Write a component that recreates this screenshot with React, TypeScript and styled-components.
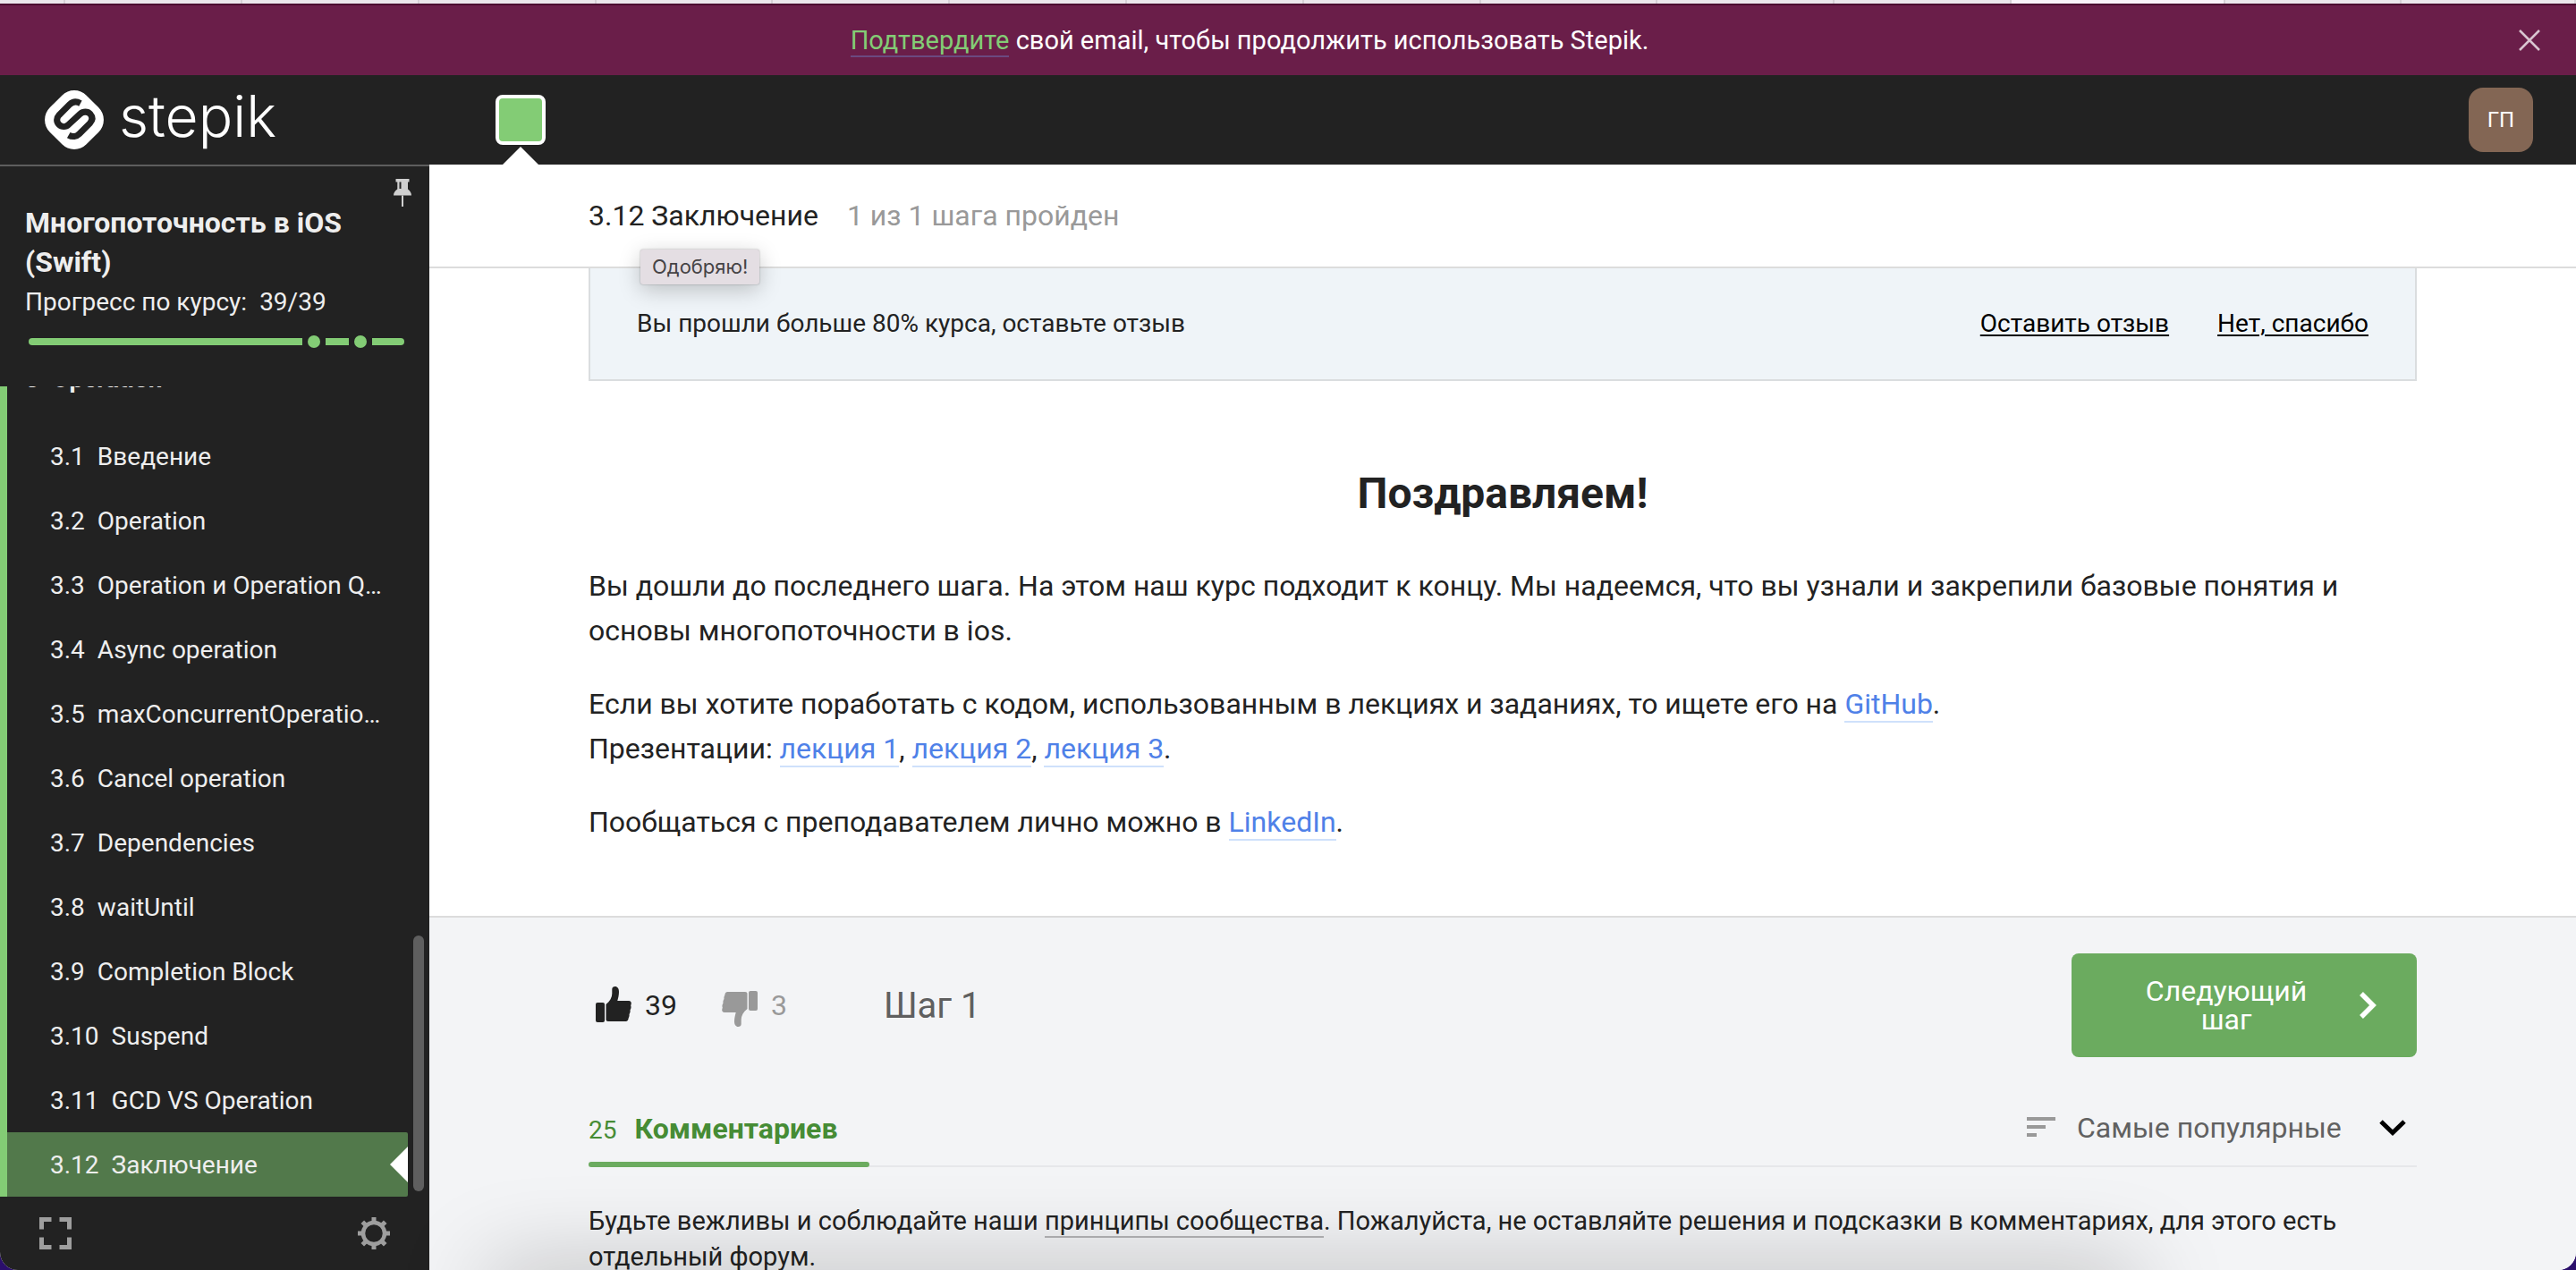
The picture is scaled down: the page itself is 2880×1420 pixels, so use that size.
import React from "react";
import styled, { createGlobalStyle, css } from "styled-components";

const GlobalStyle = createGlobalStyle`
  *, *::before, *::after { box-sizing: border-box; }
  html, body { margin: 0; padding: 0; background: #2b0f6b; }
  body { font-family: Roboto, "Noto Sans", sans-serif; color: #222; font-size: 28px; }
  h1, h2, p, ul { margin: 0; padding: 0; }
  button, select { font: inherit; color: inherit; background: none; border: 0; margin: 0; padding: 0; cursor: pointer; }
  a { color: inherit; text-decoration: none; }
  svg { display: block; flex: none; }
`;

const Page = styled.div`
  position: relative;
  display: flex;
  flex-direction: column;
  height: 100vh;
  overflow: hidden;
  background: #fff;
  border-radius: 0 0 20px 20px;
`;

const TabStrip = styled.div`
  display: flex;
  flex: none;
  height: 4px;
  background: #ebe6eb;
`;

const BrowserTab = styled.div<{ $basis: number; $active?: boolean }>`
  flex: ${(p) => p.$basis} 1 0;
  border-right: 2px solid #d6d1d6;
  background: ${(p) => (p.$active ? "#f9f2f9" : "transparent")};
`;

const EmailBar = styled.div`
  display: flex;
  align-items: center;
  flex: none;
  height: 80px;
  padding: 0 40px 0 0;
  background: #6a1e49;
  border-top: 2px solid #4b0a30;
  color: #fff;
`;

const EmailText = styled.p`
  flex: 1;
  text-align: center;
  font-size: 29px;
  line-height: 32px;
`;

const ConfirmLink = styled.a`
  color: #83cc75;
  border-bottom: 2px solid #6b4980;
`;

const CloseButton = styled.button`
  padding: 0 0 0 22px;
`;

const TopBar = styled.header`
  display: flex;
  flex: none;
  height: 100px;
  padding-right: 48px;
  background: #222;
`;

const Logo = styled.a`
  display: flex;
  align-items: center;
  gap: 17px;
  width: 480px;
  padding-left: 50px;
  color: #fff;
`;

const LogoWord = styled.span`
  font-family: Inter, "Noto Sans", sans-serif;
  font-weight: 300;
  font-size: 64px;
  line-height: 64px;
  padding-bottom: 8px;
`;

const StepPins = styled.nav`
  display: flex;
  flex: 1;
  align-items: flex-end;
  padding-left: 74px;
`;

const StepPin = styled.a`
  display: flex;
  flex-direction: column;
  align-items: center;
  gap: 2px;
`;

const StepSquare = styled.span`
  width: 56px;
  height: 56px;
  border: 4px solid #fff;
  border-radius: 8px;
  background: #83cc75;
`;

const Pointer = styled.span<{ $side: "up" | "left" }>`
  width: 0;
  height: 0;
  border: 20px solid transparent;
  ${(p) =>
    p.$side === "up"
      ? css`
          border-top: 0;
          border-bottom-color: #fff;
        `
      : css`
          border-left: 0;
          border-right-color: #fff;
        `}
`;

const Avatar = styled.button`
  align-self: center;
  width: 72px;
  height: 72px;
  border-radius: 16px;
  background: #836654;
  color: #fff;
  font-size: 24px;
`;

const Body = styled.div`
  display: flex;
  flex: 1;
  min-height: 0;
`;

const Sidebar = styled.aside`
  display: flex;
  flex-direction: column;
  flex: none;
  width: 480px;
  background: #222;
  border-top: 2px solid #5e5e5e;
  color: #eee;
`;

const CourseHead = styled.div`
  flex: none;
  padding: 14px 20px 43px 28px;
`;

const CourseTitleRow = styled.div`
  display: flex;
  align-items: flex-start;
  justify-content: space-between;
`;

const CourseTitle = styled.h2`
  flex: 1;
  margin-top: 27px;
  font-size: 32px;
  font-weight: 700;
  line-height: 44px;
`;

const CourseProgress = styled.p`
  display: flex;
  gap: 14px;
  line-height: 46px;
`;

const Track = styled.div`
  display: flex;
  align-items: center;
  gap: 6px;
  height: 14px;
  margin: 14px 8px 0 4px;
`;

const TrackBar = styled.span<{ $grow: number; $edge?: "start" | "end" }>`
  flex: ${(p) => p.$grow} 1 0;
  height: 8px;
  background: #83cc75;
  border-radius: ${(p) =>
    p.$edge === "start" ? "4px 0 0 4px" : p.$edge === "end" ? "0 4px 4px 0" : "0"};
`;

const TrackDot = styled.span`
  width: 14px;
  height: 14px;
  border-radius: 50%;
  background: #83cc75;
`;

const LessonArea = styled.nav`
  display: flex;
  flex: 1;
  min-height: 0;
  overflow: hidden;
`;

const LessonColumn = styled.div`
  display: flex;
  flex: 1;
  min-width: 0;
  flex-direction: column;
  justify-content: flex-end;
  border-left: 8px solid #83cc75;
`;

const ModuleTitle = styled.div`
  display: flex;
  flex: none;
  gap: 14px;
  padding-left: 20px;
  margin-bottom: 14px;
  line-height: 72px;
  font-weight: 700;
`;

const LessonList = styled.ul`
  flex: none;
  list-style: none;
`;

const Lesson = styled.a<{ $active?: boolean }>`
  display: flex;
  align-items: center;
  gap: 14px;
  height: 72px;
  padding-left: 48px;
  border-radius: 0 2px 2px 0;
  background: ${(p) => (p.$active ? "#52794b" : "transparent")};
`;

const LessonName = styled.span`
  flex: 1;
  min-width: 0;
  padding-right: 26px;
  overflow: hidden;
  text-overflow: ellipsis;
  white-space: nowrap;
`;

const ScrollRail = styled.div`
  display: flex;
  flex: none;
  flex-direction: column;
  justify-content: flex-end;
  width: 24px;
  padding: 6px;
`;

const ScrollThumb = styled.div`
  height: 32%;
  border-radius: 6px;
  background: #5f5f5f;
`;

const SidebarFoot = styled.div`
  display: flex;
  flex: none;
  justify-content: space-between;
  height: 82px;
  padding: 23px 44px;
  color: #9e9e9e;
`;

const Main = styled.main`
  flex: 1;
  min-width: 0;
  overflow: hidden;
`;

const LessonHead = styled.div`
  position: relative;
  display: flex;
  align-items: center;
  gap: 32px;
  height: 116px;
  padding: 0 178px;
  border-bottom: 2px solid #dcdcdc;
  font-size: 32px;
`;

const Passed = styled.span`
  color: #999;
`;

const Tooltip = styled.div`
  position: absolute;
  left: 236px;
  top: 95px;
  padding: 0 13px;
  border-radius: 3px;
  background: #e4dee3;
  box-shadow: 0 6px 24px rgba(0, 0, 0, 0.22), 0 0 2px rgba(0, 0, 0, 0.35);
  color: #454345;
  font-family: Inter, "Noto Sans", sans-serif;
  font-size: 22px;
  line-height: 39px;
`;

const Content = styled.div`
  padding: 0 178px;
`;

const ReviewBox = styled.div`
  display: flex;
  gap: 54px;
  padding: 40px 52px;
  border: 2px solid #dadddf;
  border-top: 0;
  background: #eff4f8;
  line-height: 44px;
`;

const ReviewText = styled.p`
  flex: 1;
`;

const ReviewAction = styled.button`
  color: #000;
  text-decoration: underline;
  text-decoration-thickness: 2px;
  text-underline-offset: 3px;
`;

const Article = styled.article`
  display: flex;
  flex-direction: column;
  gap: 32px;
  padding: 96px 0 80px;
  font-size: 32px;
  line-height: 50px;
`;

const Heading = styled.h1`
  margin-bottom: 16px;
  text-align: center;
  font-size: 48px;
  line-height: 60px;
`;

const TextLink = styled.a`
  color: #4f81e8;
  border-bottom: 2px solid #cfe1fb;
`;

const Discussion = styled.section`
  min-height: 100%;
  padding: 40px 178px 0;
  border-top: 2px solid #dcdcdc;
  background: #f3f4f6;
`;

const StepRow = styled.div`
  display: flex;
  align-items: center;
  padding-left: 8px;
`;

const Vote = styled.button<{ $muted?: boolean }>`
  display: flex;
  align-items: center;
  gap: 15px;
  margin-right: 50px;
  font-size: 32px;
  color: ${(p) => (p.$muted ? "#999" : "#222")};
`;

const StepLabel = styled.span`
  flex: 1;
  padding-left: 58px;
  font-size: 40px;
  color: #5f5f5f;
`;

const NextButton = styled.button`
  display: flex;
  align-items: center;
  gap: 16px;
  width: 386px;
  height: 116px;
  padding: 0 44px 0 40px;
  border-radius: 8px;
  background: #6bab5f;
  color: #fff;
  font-size: 32px;
  line-height: 32px;
`;

const NextText = styled.span`
  flex: 1;
  padding: 0 36px;
  text-align: center;
`;

const CommentsHead = styled.div`
  display: flex;
  align-items: stretch;
  justify-content: space-between;
  height: 87px;
  margin-top: 36px;
  border-bottom: 2px solid #e6e7ea;
`;

const CommentsTab = styled.button`
  position: relative;
  display: flex;
  align-items: baseline;
  gap: 20px;
  padding: 22px 36px 0 0;
  color: #468c35;
  line-height: 44px;

  &::after {
    content: "";
    position: absolute;
    left: 0;
    right: 0;
    bottom: -2px;
    height: 6px;
    border-radius: 3px;
    background: #6bab5f;
  }
`;

const CommentsWord = styled.span`
  font-size: 32px;
  font-weight: 700;
`;

const Sort = styled.label`
  position: relative;
  display: flex;
  align-items: center;
  gap: 24px;
  padding-right: 12px;
  color: #616161;
`;

const SortSelect = styled.select`
  appearance: none;
  padding-right: 72px;
  font-size: 32px;
`;

const SortChevron = styled.svg`
  position: absolute;
  right: 12px;
  pointer-events: none;
`;

const Rules = styled.p`
  margin-top: 40px;
  font-size: 29px;
  line-height: 40px;
`;

const RulesLink = styled.a`
  border-bottom: 2px solid #b4b4b6;
`;

const DockShadow = styled.div`
  position: absolute;
  left: 19%;
  right: 17%;
  top: 100%;
  height: 60px;
  pointer-events: none;
  box-shadow: 0 0 100px rgba(0, 0, 0, 0.27);
`;

const lessons: [string, string][] = [
  ["3.1", "Введение"],
  ["3.2", "Operation"],
  ["3.3", "Operation и Operation Queue"],
  ["3.4", "Async operation"],
  ["3.5", "maxConcurrentOperationCount"],
  ["3.6", "Cancel operation"],
  ["3.7", "Dependencies"],
  ["3.8", "waitUntil"],
  ["3.9", "Completion Block"],
  ["3.10", "Suspend"],
  ["3.11", "GCD VS Operation"],
  ["3.12", "Заключение"],
];

const tabs = [72, 198, 198, 198, 198, 198, 198, 198, 198, 198, 198, 198, 240, 197, 195];

const LogoMark = () => (
  <svg width="66" height="66" viewBox="0 0 195 195" aria-hidden="true">
    <rect x="12" y="12" width="171" height="171" rx="57" fill="#fff" transform="rotate(45 97.5 97.5)" />
    <path
      d="M118 43C105 36 92 38 83 46L48 81C38 92 38 104 47 113C56 122 70 122 79 113L117 78C127 69 142 69 150 78C159 88 158 99 149 109L114 144C105 153 91 155 79 148"
      fill="none"
      stroke="#222"
      strokeWidth="21"
    />
  </svg>
);

const PinIcon = () => (
  <svg width="20" height="31" viewBox="0 0 20 31" fill="#d0d0d0">
    <path fillRule="evenodd" d="M2.5 0H17.5V3.5H16V11.5C18.5 13.5 20 15.5 20 18.500H0C0 15.500 1.500 13.500 4.300 11.500V3.500H2.500ZM6.500 3.500V11H8.500V3.500Z" />
    <path d="M9 18.500H11V31H9Z" />
  </svg>
);

const ExpandIcon = () => (
  <svg width="36" height="36" viewBox="0 0 36 36" fill="none" stroke="currentColor" strokeWidth="5">
    <path d="M2.500 13.500V2.500H13.500M22.500 2.500H33.500V13.500M33.500 22.500V33.500H22.500M13.500 33.500H2.500V22.500" />
  </svg>
);

const GearIcon = () => (
  <svg width="36" height="36" viewBox="0 0 36 36" fill="none" stroke="currentColor">
    <circle cx="18" cy="18" r="12" strokeWidth="4.500" />
    {[0, 45, 90, 135, 180, 225, 270, 315].map((a) => (
      <path key={a} d="M18 5V0" strokeWidth="5" transform={`rotate(${a} 18 18)`} />
    ))}
  </svg>
);

const ThumbIcon = ({ down }: { down?: boolean }) => (
  <svg width="40" height="48" viewBox="0 0 40 48" fill="currentColor">
    <g transform={down ? "translate(0 8) rotate(180 20 20)" : "translate(0 3)"}>
      <rect x="0" y="18" width="10" height="22" rx="2" />
      <path d="M11.500 20C16 16.500 18.300 12 18.300 8V3C18.300 1 19.800 0 21.600 0C24.500 0 26 2.500 26 6C26 10 25 13 24.300 16H37C39 16 40 17.500 39.800 19L39.200 21.500C40 23 39.400 25 38.500 26.200C38.900 28 38.400 29.800 37.500 31C37.800 32.800 37.400 34 36.700 35.200C36.500 37.500 35.500 39 33.500 39H14C12.500 39 11.500 38.300 11.500 37Z" />
    </g>
  </svg>
);

export default function App() {
  return (
    <>
      <GlobalStyle />
      <Page>
        <TabStrip>
          {tabs.map((w, i) => (
            <BrowserTab key={i} $basis={w} $active={w === 240} />
          ))}
        </TabStrip>
        <EmailBar>
          <EmailText>
            <ConfirmLink href="#">Подтвердите</ConfirmLink> свой email, чтобы продолжить использовать Stepik.
          </EmailText>
          <CloseButton aria-label="Закрыть">
            <svg width="24" height="24" viewBox="0 0 24 24" stroke="#d9c5d0" strokeWidth="2.500">
              <path d="M1 1L23 23M23 1L1 23" />
            </svg>
          </CloseButton>
        </EmailBar>
        <TopBar>
          <Logo href="#">
            <LogoMark />
            <LogoWord>stepik</LogoWord>
          </Logo>
          <StepPins>
            <StepPin href="#" aria-label="Шаг 1">
              <StepSquare />
              <Pointer $side="up" />
            </StepPin>
          </StepPins>
          <Avatar>ГП</Avatar>
        </TopBar>
        <Body>
          <Sidebar>
            <CourseHead>
              <CourseTitleRow>
                <CourseTitle>Многопоточность в iOS (Swift)</CourseTitle>
                <button aria-label="Закрепить">
                  <PinIcon />
                </button>
              </CourseTitleRow>
              <CourseProgress>
                <span>Прогресс по курсу:</span>
                <span>39/39</span>
              </CourseProgress>
              <Track>
                <TrackBar $grow={306} $edge="start" />
                <TrackDot />
                <TrackBar $grow={26} />
                <TrackDot />
                <TrackBar $grow={36} $edge="end" />
              </Track>
            </CourseHead>
            <LessonArea>
              <LessonColumn>
                <ModuleTitle>
                  <span>3</span>
                  <span>Operation</span>
                </ModuleTitle>
                <LessonList>
                  {lessons.map(([num, name]) => {
                    const active = num === "3.12";
                    return (
                      <li key={num}>
                        <Lesson href="#" $active={active}>
                          <span>{num}</span>
                          <LessonName>{name}</LessonName>
                          {active && <Pointer $side="left" />}
                        </Lesson>
                      </li>
                    );
                  })}
                </LessonList>
              </LessonColumn>
              <ScrollRail>
                <ScrollThumb />
              </ScrollRail>
            </LessonArea>
            <SidebarFoot>
              <button aria-label="На весь экран">
                <ExpandIcon />
              </button>
              <button aria-label="Настройки">
                <GearIcon />
              </button>
            </SidebarFoot>
          </Sidebar>
          <Main>
            <LessonHead>
              <span>3.12 Заключение</span>
              <Passed>1 из 1 шага пройден</Passed>
              <Tooltip role="tooltip">Одобряю!</Tooltip>
            </LessonHead>
            <Content>
              <ReviewBox>
                <ReviewText>Вы прошли больше 80% курса, оставьте отзыв</ReviewText>
                <ReviewAction>Оставить отзыв</ReviewAction>
                <ReviewAction>Нет, спасибо</ReviewAction>
              </ReviewBox>
              <Article>
                <Heading>Поздравляем!</Heading>
                <p>
                  Вы дошли до последнего шага. На этом наш курс подходит к концу. Мы надеемся, что вы узнали и закрепили
                  базовые понятия и основы многопоточности в ios.
                </p>
                <p>
                  Если вы хотите поработать с кодом, использованным в лекциях и заданиях, то ищете его на{" "}
                  <TextLink href="#">GitHub</TextLink>.
                  <br />
                  Презентации: <TextLink href="#">лекция 1</TextLink>, <TextLink href="#">лекция 2</TextLink>,{" "}
                  <TextLink href="#">лекция 3</TextLink>.
                </p>
                <p>
                  Пообщаться с преподавателем лично можно в <TextLink href="#">LinkedIn</TextLink>.
                </p>
              </Article>
            </Content>
            <Discussion>
              <StepRow>
                <Vote>
                  <ThumbIcon />
                  39
                </Vote>
                <Vote $muted>
                  <ThumbIcon down />3
                </Vote>
                <StepLabel>Шаг 1</StepLabel>
                <NextButton>
                  <NextText>Следующий шаг</NextText>
                  <svg width="20" height="30" viewBox="0 0 20 30" fill="none" stroke="#fff" strokeWidth="5.500">
                    <path d="M2 2L15 15L2 28" />
                  </svg>
                </NextButton>
              </StepRow>
              <CommentsHead>
                <CommentsTab>
                  <span>25</span>
                  <CommentsWord>Комментариев</CommentsWord>
                </CommentsTab>
                <Sort>
                  <svg width="32" height="24" viewBox="0 0 32 24" fill="#999">
                    <path d="M0 0H32V4H0ZM0 9H21V13H0ZM0 18H11V22H0Z" />
                  </svg>
                  <SortSelect aria-label="Сортировка">
                    <option>Самые популярные</option>
                  </SortSelect>
                  <SortChevron width="30" height="18" viewBox="0 0 30 18" fill="none" stroke="#000" strokeWidth="5">
                    <path d="M2 2L15 14.500L28 2" />
                  </SortChevron>
                </Sort>
              </CommentsHead>
              <Rules>
                Будьте вежливы и соблюдайте наши <RulesLink href="#">принципы сообщества</RulesLink>. Пожалуйста, не
                оставляйте решения и подсказки в комментариях, для этого есть отдельный форум.
              </Rules>
            </Discussion>
          </Main>
        </Body>
        <DockShadow />
      </Page>
    </>
  );
}
